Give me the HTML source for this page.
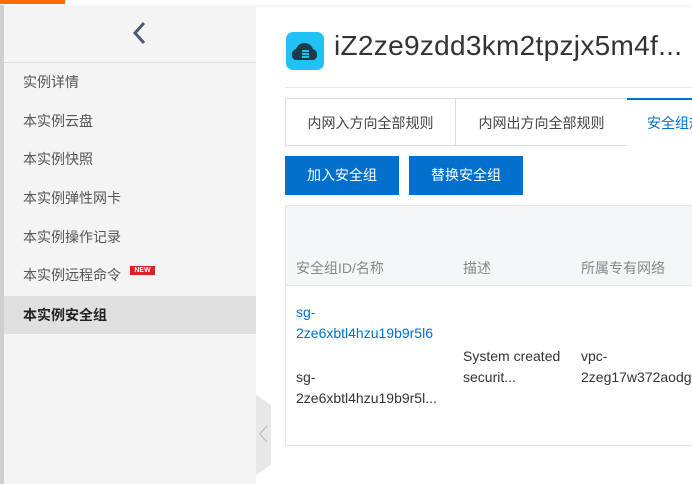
<!DOCTYPE html>
<html><head><meta charset="utf-8"><style>
*{margin:0;padding:0;box-sizing:border-box}
body{width:692px;height:484px;overflow:hidden;background:#fff;font-family:"Liberation Sans","Noto Sans CJK SC",sans-serif;position:relative}
.abs{position:absolute}
.side{left:4px;top:5px;width:252px;height:479px;background:#f4f4f4}
.item{position:absolute;left:23px;font-size:14px;color:#555;white-space:nowrap}
.tab{position:absolute;top:98px;height:48px;border:1px solid #ddd;background:#fff;font-size:14px;color:#444;text-align:center;line-height:48px;white-space:nowrap;overflow:hidden}
.btn{position:absolute;top:156px;height:39px;background:#0070cc;color:#fff;font-size:14px;text-align:center;line-height:39px}
.th{position:absolute;top:258px;font-size:14px;color:#888}
.td{position:absolute;font-size:14px;color:#333;line-height:21px}
</style></head><body>
<div class="abs" style="left:0;top:0;width:692px;height:5px;background:#fff;box-shadow:0 1px 3px rgba(0,0,0,.08)"></div>
<div class="abs" style="left:0;top:0;width:65px;height:4px;background:#ff6a00"></div>
<div class="abs" style="left:0;top:5px;width:4px;height:479px;background:#cfcfcf"></div>
<div class="abs side"></div>
<svg class="abs" style="left:130px;top:20px" width="20" height="26"><path d="M14 3 L5 13 L14 23" stroke="#4a5a6e" stroke-width="3" fill="none"/></svg>
<div class="abs" style="left:4px;top:62px;width:252px;height:1px;background:#ddd"></div>
<div class="item" style="top:72px">实例详情</div>
<div class="item" style="top:111px">本实例云盘</div>
<div class="item" style="top:149px">本实例快照</div>
<div class="item" style="top:188px">本实例弹性网卡</div>
<div class="item" style="top:227px">本实例操作记录</div>
<div class="item" style="top:265px">本实例远程命令</div>
<div class="abs" style="left:130px;top:266px;width:25px;height:9px;background:#e02020;color:#fff;font-size:7px;font-weight:bold;line-height:9px;text-align:center">NEW</div>
<div class="abs" style="left:4px;top:296px;width:252px;height:38px;background:#e0e0e0"></div>
<div class="item" style="top:305px;color:#222;font-weight:bold">本实例安全组</div>
<svg class="abs" style="left:256px;top:395px" width="16" height="80"><path d="M0 0 L15 10 L15 70 L0 80Z" fill="#e8e8e8"/><path d="M11 31 L4 39 L11 47" stroke="#bbb" stroke-width="1.2" fill="none"/></svg>
<svg class="abs" style="left:286px;top:32px" width="38" height="38"><rect width="38" height="38" rx="7" fill="#1fc2f2"/><path d="M9 28 a6 6 0 0 1 1-11 a9 9 0 0 1 17 0 a6 6 0 0 1 1 11z" fill="#1d3a4e"/><rect x="16" y="18" width="7" height="2" fill="#1fc2f2"/><rect x="16" y="21" width="7" height="2" fill="#1fc2f2"/><rect x="16" y="24" width="7" height="2" fill="#1fc2f2"/></svg>
<div class="abs" style="left:334px;top:30px;font-size:28px;letter-spacing:0.3px;color:#333;white-space:nowrap">iZ2ze9zdd3km2tpzjx5m4f...</div>
<div class="abs" style="left:285px;top:87px;width:407px;height:1px;background:#e5e5e5"></div>
<div class="tab" style="left:285px;width:171px">内网入方向全部规则</div>
<div class="tab" style="left:455px;width:173px">内网出方向全部规则</div>
<div class="tab" style="left:627px;width:80px;border:none;border-top:2px solid #0070cc;color:#0070cc;text-align:left;padding-left:20px;line-height:46px">安全组规则</div>
<div class="btn" style="left:285px;width:114px">加入安全组</div>
<div class="btn" style="left:409px;width:114px">替换安全组</div>
<div class="abs" style="left:285px;top:205px;width:420px;height:241px;border:1px solid #e5e5e5"></div>
<div class="abs" style="left:286px;top:206px;width:420px;height:80px;background:#f5f6f8;border-bottom:1px solid #e5e5e5"></div>
<div class="th" style="left:296px">安全组ID/名称</div>
<div class="th" style="left:463px">描述</div>
<div class="th" style="left:581px">所属专有网络</div>
<div class="td" style="left:296px;top:302px;color:#0070cc">sg-<br>2ze6xbtl4hzu19b9r5l6</div>
<div class="td" style="left:296px;top:367px">sg-<br>2ze6xbtl4hzu19b9r5l...</div>
<div class="td" style="left:463px;top:346px">System created<br>securit...</div>
<div class="td" style="left:581px;top:346px;white-space:nowrap">vpc-<br>2zeg17w372aodg</div>
</body></html>
